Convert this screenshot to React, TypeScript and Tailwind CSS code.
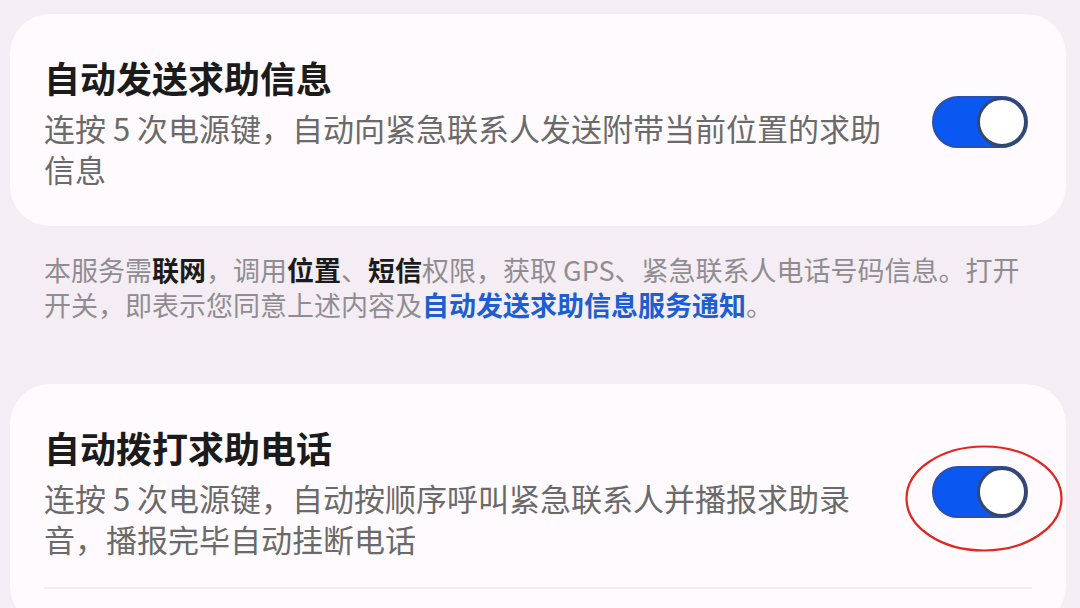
import type { ReactNode } from 'react';

const FONT = '"Noto Sans CJK SC", "Noto Sans", sans-serif';

function Toggle({ circled = false }: { circled?: boolean }) {
  return (
    <div className="relative mr-[4px] shrink-0">
      <div className="relative h-[52px] w-[96px] rounded-full border-2 border-[#2d4fa8] bg-[#0b57f2]">
        <div className="absolute right-[-1px] top-[-1px] h-[50px] w-[50px] rounded-full border-[3px] border-[#34476e] bg-white" />
      </div>
      {circled && (
        <svg
          className="absolute left-[-27px] top-[-21px]"
          width="158"
          height="107"
          viewBox="0 0 158 107"
        >
          <ellipse cx="79" cy="53.5" rx="77.5" ry="52" fill="none" stroke="#e1251f" strokeWidth="2.2" />
        </svg>
      )}
    </div>
  );
}

function SettingCard({
  title,
  lines,
  circled,
  divider,
}: {
  title: string;
  lines: ReactNode[];
  circled?: boolean;
  divider?: boolean;
}) {
  return (
    <div className="ml-[10px] w-[1056px] rounded-[40px] bg-[#fefafd] px-[34px] pt-[40px] pb-[37px]">
      <div className="flex items-center justify-between">
        <div className="flex flex-col gap-[7px]">
          <span className="text-[36px] leading-[46px] font-bold text-[#1b1b1b]">{title}</span>
          <p className="text-[31px] leading-[41px] text-[#6a6a6a]">
            {lines.map((l, i) => (
              <span key={i} className="block whitespace-nowrap">
                {l}
              </span>
            ))}
          </p>
        </div>
        <Toggle circled={circled} />
      </div>
      {divider && <div className="mt-[28px] h-[2px] bg-[#f3ebf1]" />}
    </div>
  );
}

export default function App() {
  return (
    <div
      className="h-[608px] w-[1080px] overflow-hidden bg-[#f4edf3] pt-[14px]"
      style={{ fontFamily: FONT }}
    >
      <SettingCard
        title="自动发送求助信息"
        lines={['连按 5 次电源键，自动向紧急联系人发送附带当前位置的求助', '信息']}
      />

      <div className="mt-[26px] px-[44px] text-[27px] leading-[35px] text-[#8f8d92]">
        <span className="block whitespace-nowrap">
          本服务需<b className="text-[#1b1b1b]">联网</b>，调用<b className="text-[#1b1b1b]">位置</b>、
          <b className="text-[#1b1b1b]">短信</b>权限，获取 GPS、紧急联系人电话号码信息。打开
        </span>
        <span className="block whitespace-nowrap">
          开关，即表示您同意上述内容及
          <b className="text-[#1d5fd0]">自动发送求助信息服务通知</b>。
        </span>
      </div>

      <div className="mt-[62px]">
        <SettingCard
          title="自动拨打求助电话"
          lines={['连按 5 次电源键，自动按顺序呼叫紧急联系人并播报求助录', '音，播报完毕自动挂断电话']}
          circled
          divider
        />
      </div>
    </div>
  );
}
